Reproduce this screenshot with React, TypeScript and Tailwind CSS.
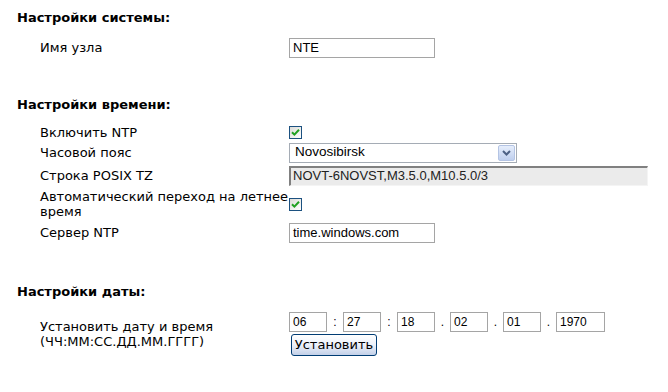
import React from "react";

const labelFont = "font-['DejaVu_Sans',Verdana,sans-serif]";
const fieldFont = "font-['Liberation_Sans',Arial,sans-serif]";

function Heading({ children, className = "" }: { children: React.ReactNode; className?: string }) {
  return (
    <div className={`pl-[17px] text-[13px] font-bold leading-[15px] text-black ${labelFont} ${className}`}>
      {children}
    </div>
  );
}

function Row({ label, h, children }: { label: React.ReactNode; h: string; children: React.ReactNode }) {
  return (
    <div className={`flex items-center pl-[40px] ${h}`}>
      <div className={`w-[249px] shrink-0 text-[13px] leading-[15px] text-black ${labelFont}`}>{label}</div>
      <div>{children}</div>
    </div>
  );
}

function Check() {
  return (
    <span className="flex h-[13px] w-[13px] items-center justify-center border border-[#1c5180] bg-gradient-to-br from-[#dcdcd7] to-white">
      <svg width="9" height="9" viewBox="0 0 9 9">
        <path d="M1 4.2 L3.4 6.6 L8 1.8" fill="none" stroke="#21a121" strokeWidth="2" />
      </svg>
    </span>
  );
}

function TextBox({ value, w }: { value: string; w: string }) {
  return (
    <div className={`flex h-[20px] items-center border border-[#a5a5a5] bg-white pl-[3px] text-[13px] text-black ${fieldFont} ${w}`}>
      {value}
    </div>
  );
}

function DateBox({ value, w = "w-[38px]" }: { value: string; w?: string }) {
  return (
    <div className={`flex h-[20px] items-center border border-[#a5a5a5] bg-white pl-[3px] text-[12px] text-black ${fieldFont} ${w}`}>
      {value}
    </div>
  );
}

function Sep({ c, w }: { c: string; w: string }) {
  return <span className={`${w} text-center text-[12px] text-black ${fieldFont}`}>{c}</span>;
}

export default function App() {
  return (
    <div className="h-[392px] w-[668px] overflow-hidden bg-white pt-[10px]">
      <Heading>Настройки системы:</Heading>
      <div className="mt-[11px]">
        <Row label="Имя узла" h="h-[23px]">
          <TextBox value="NTE" w="w-[146px]" />
        </Row>
      </div>

      <Heading className="mt-[38px]">Настройки времени:</Heading>
      <div className="mt-[11px]">
        <Row label="Включить NTP" h="h-[18px]">
          <Check />
        </Row>
        <Row label="Часовой пояс" h="h-[23px]">
          <div className={`flex h-[20px] w-[228px] items-center border border-[#a5acb5] bg-white pl-[5px] pr-[1px] text-[13.5px] text-black ${fieldFont}`}>
            <span className="flex-1">Novosibirsk</span>
            <span className="flex h-[16px] w-[17px] items-center justify-center rounded-[2px] border border-[#b4c4e4] bg-gradient-to-b from-[#e6eefc] to-[#bfcfee]">
              <svg width="9" height="6" viewBox="0 0 9 6">
                <path d="M1 1 L4.5 4.5 L8 1" fill="none" stroke="#4d6185" strokeWidth="2" />
              </svg>
            </span>
          </div>
        </Row>
        <Row label="Строка POSIX TZ" h="h-[23px]">
          <div className={`flex h-[20px] w-[359px] items-center border-l-2 border-t-2 border-b border-r border-l-[#808080] border-t-[#808080] border-b-[#f4f4f4] border-r-[#f4f4f4] bg-[#ebebeb] pl-[2px] text-[13px] text-[#222] ${fieldFont}`}>
            NOVT-6NOVST,M3.5.0,M10.5.0/3
          </div>
        </Row>
        <Row label="Автоматический переход на летнее время" h="h-[34px]">
          <Check />
        </Row>
        <Row label="Сервер NTP" h="h-[23px]">
          <TextBox value="time.windows.com" w="w-[146px]" />
        </Row>
      </div>

      <Heading className="mt-[40px]">Настройки даты:</Heading>
      <div className="mt-[11px]">
        <Row label={<>Установить дату и время<br />(ЧЧ:ММ:СС.ДД.ММ.ГГГГ)</>} h="h-[48px]">
          <div className="flex flex-col gap-[2px]">
            <div className="flex items-center">
              <DateBox value="06" />
              <Sep c=":" w="w-[16px]" />
              <DateBox value="27" />
              <Sep c=":" w="w-[16px]" />
              <DateBox value="18" />
              <Sep c="." w="w-[15px]" />
              <DateBox value="02" />
              <Sep c="." w="w-[15px]" />
              <DateBox value="01" />
              <Sep c="." w="w-[15px]" />
              <DateBox value="1970" w="w-[49px]" />
            </div>
            <button
              className={`ml-[2px] h-[22px] w-[86px] rounded-[3px] border border-[#003c74] bg-gradient-to-b from-white via-[#ecf1fa] to-[#c3d0e8] text-[13px] text-black ${labelFont}`}
            >
              Установить
            </button>
          </div>
        </Row>
      </div>
    </div>
  );
}
